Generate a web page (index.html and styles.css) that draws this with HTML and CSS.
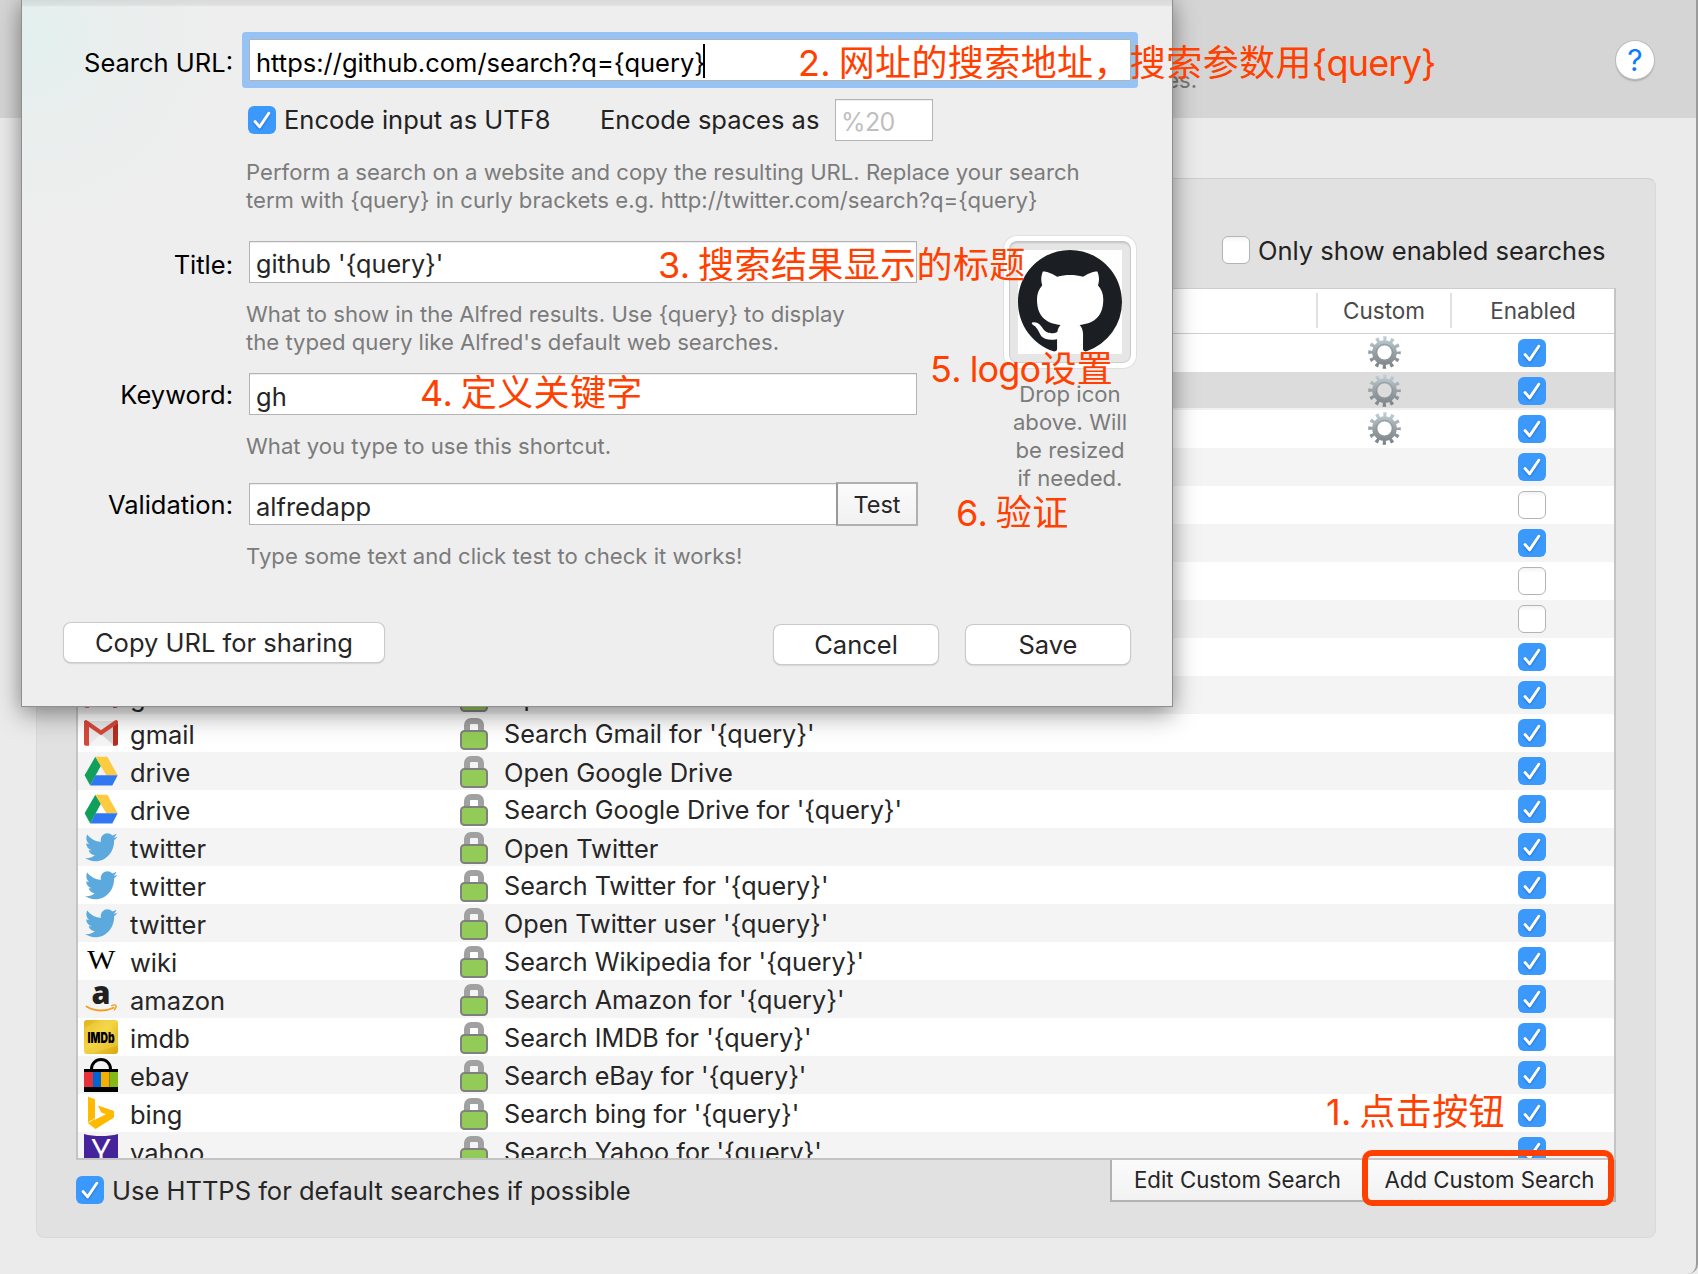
FILE: index.html
```html
<!DOCTYPE html>
<html lang="en">
<head>
<meta charset="utf-8">
<title>Web Search</title>
<link rel="stylesheet" href="styles.css">
</head>
<body>
<svg class="defs" aria-hidden="true">
  <defs>
    <linearGradient id="metal" x1="0" y1="0" x2="0" y2="33" gradientUnits="userSpaceOnUse">
      <stop offset="0" stop-color="#c3d3da"/><stop offset=".5" stop-color="#98a1a6"/><stop offset="1" stop-color="#7b8083"/>
    </linearGradient>
    <linearGradient id="gold" x1="0" y1="0" x2="1" y2="1">
      <stop offset="0" stop-color="#e0b21a"/><stop offset=".45" stop-color="#f3d544"/><stop offset="1" stop-color="#dba60c"/>
    </linearGradient>
    <symbol id="tick" viewBox="0 0 28 28"><path d="M7 15.5l4.6 5.4L20.8 7.2" fill="none" stroke="#fff" stroke-width="2.9" stroke-linecap="round" stroke-linejoin="round"/></symbol>
    <symbol id="gear" viewBox="0 0 33 33">
      <circle cx="16.5" cy="16.5" r="13.8" fill="none" stroke="url(#metal)" stroke-width="5" stroke-dasharray="3.2 4.025" stroke-dashoffset="1.6"/>
      <circle cx="16.5" cy="16.5" r="9.7" fill="none" stroke="url(#metal)" stroke-width="5.2"/>
      <circle cx="16.5" cy="16.5" r="8.2" fill="none" stroke="#8b9599" stroke-width=".8"/>
    </symbol>
    <symbol id="lock" viewBox="0 0 28 38">
      <path d="M7 18V11a4 4 0 0 1 4-4h6a4 4 0 0 1 4 4v7" fill="none" stroke="#a1a1a1" stroke-width="6"/>
      <rect x="1" y="17" width="26" height="18" rx="3.5" fill="#92cb57" stroke="#808080" stroke-width="2"/>
    </symbol>
    <symbol id="gmail" viewBox="0 0 34 38">
      <path d="M2 7h30v24.5H2z" fill="#e9e9e9"/><path d="M17 20L4 31.5h26z" fill="#f4f4f4"/><path d="M30 11v20.500L17 20z" fill="#d5d5d5"/>
      <path d="M0 9v20.500a2 2 0 0 0 2 2.200h3V12z" fill="#d6483c"/><path d="M34 9v20.500a2 2 0 0 1-2 2.200h-3V12z" fill="#b52d20"/>
      <path d="M2 8.200L17 18.800 32 8.200" fill="none" stroke="#d9463a" stroke-width="4.200" stroke-linecap="round" stroke-linejoin="miter"/>
    </symbol>
    <symbol id="drive" viewBox="0 0 34 38">
      <path d="M11.300 4.800L17 13.600 6.200 33.500.600 23.300z" fill="#11a05c"/>
      <path d="M11.300 4.800h12L33.700 23.300H22.300z" fill="#fdcb40"/>
      <path d="M11.500 23.300h22.200L28.300 33.500H6.200z" fill="#2f78f2"/>
    </symbol>
    <symbol id="twitter" viewBox="0 0 34 38">
      <path transform="translate(1 2.100) scale(1.350 1.430)" fill="#5ca9dd" d="M23.954 4.569c-.885.389-1.830.654-2.825.775 1.014-.611 1.794-1.574 2.163-2.723-.951.555-2.005.959-3.127 1.184-.896-.959-2.173-1.559-3.591-1.559-2.717 0-4.920 2.203-4.920 4.917 0 .390.045.765.127 1.124C7.691 8.094 4.066 6.130 1.640 3.161c-.427.722-.666 1.561-.666 2.475 0 1.710.870 3.213 2.188 4.096-.807-.026-1.566-.248-2.228-.616v.061c0 2.385 1.693 4.374 3.946 4.827-.413.111-.849.171-1.296.171-.314 0-.615-.030-.916-.086.631 1.953 2.445 3.377 4.604 3.417-1.680 1.319-3.809 2.105-6.102 2.105-.390 0-.779-.023-1.170-.067 2.189 1.394 4.768 2.209 7.557 2.209 9.054 0 13.999-7.496 13.999-13.986 0-.209 0-.420-.015-.630.961-.689 1.800-1.560 2.460-2.548z"/>
    </symbol>
    <symbol id="wiki" viewBox="0 0 34 38"><text x="3.200" y="27.200" font-family="Liberation Serif, serif" font-size="27" textLength="28" lengthAdjust="spacingAndGlyphs">W</text></symbol>
    <symbol id="amazon" viewBox="0 0 34 38">
      <text x="7.600" y="24" font-family="Open Sans, sans-serif" font-weight="800" font-size="32" fill="#221f1f" textLength="19" lengthAdjust="spacingAndGlyphs">a</text>
      <path d="M2.500 26.500c8.500 5.300 19.500 5 27 1.200" fill="none" stroke="#f79b1c" stroke-width="1.800" stroke-linecap="round"/>
      <path d="M27.500 25.600c2-.700 3.800-.800 4.400-.3.400.700-.1 2.900-1.500 4.400" fill="none" stroke="#f79b1c" stroke-width="1.300" stroke-linecap="round"/>
    </symbol>
    <symbol id="imdb" viewBox="0 0 34 38">
      <rect y="2" width="34" height="34" rx="3" fill="url(#gold)"/><path d="M0 10L16 2h8L34 22v6L18 32 8 36z" fill="#f6dc55" opacity=".35"/>
      <text x="3.600" y="24.700" font-family="Inter, sans-serif" font-weight="900" font-size="14.800" textLength="27" lengthAdjust="spacingAndGlyphs">IMDb</text>
    </symbol>
    <symbol id="ebay" viewBox="0 0 34 38">
      <path d="M7.500 14v-1a9.500 9.500 0 0 1 19 0v1" fill="none" stroke="#000" stroke-width="3"/>
      <path d="M0 13h34v23H0z"/><path d="M0 16h9v15H0z" fill="#e53238"/><path d="M9 16h8v15H9z" fill="#0064d2"/><path d="M17 16h8.500v15H17z" fill="#f5af02"/><path d="M25.500 16H34v15h-8.500z" fill="#86b817"/>
    </symbol>
    <symbol id="bing" viewBox="0 0 34 38">
      <path d="M4 2.700l7 2.600v20.900l-7 3z" fill="#ffb900"/><path d="M4 29.300L22 20.300l-5-2-3-6.900L30 17v6.500L11.600 35z" fill="#ffb900"/>
      <path d="M4.500 28.300l7.500-4.500" stroke="#fff" stroke-width=".8"/>
    </symbol>
    <symbol id="yahoo" viewBox="0 0 34 38">
      <path d="M0 2c10 2.700 24 2.700 34 0v34H0z" fill="#45239b"/>
      <text x="17" y="31.500" text-anchor="middle" font-family="Open Sans, sans-serif" font-size="34" fill="#fff" textLength="19" lengthAdjust="spacingAndGlyphs">Y</text>
    </symbol>
  </defs>
</svg>

<div class="window">
  <header class="header">
    <span class="header-text">es.</span>
    <button class="help-button">?</button>
  </header>

  <main class="panel">
    <div class="filter">
      <span class="check"></span><span>Only show enabled searches</span>
    </div>

    <div class="table">
      <div class="thead"><span class="th custom">Custom</span><span class="th enabled">Enabled</span></div>
      <div class="rows" id="rows"></div>
    </div>

    <footer class="footer">
      <div class="https"><span class="check on"><svg><use href="#tick"/></svg></span><span>Use HTTPS for default searches if possible</span></div>
      <div class="segments">
        <button class="segment">Edit Custom Search</button>
        <button class="segment add">Add Custom Search</button>
      </div>
    </footer>
  </main>
</div>

<section class="sheet">
  <div class="field-row">
    <label class="label">Search URL:</label>
    <div class="input focused">https://github.com/search?q={query}<i class="caret"></i></div>
  </div>
  <div class="encode-row">
    <span class="check on"><svg><use href="#tick"/></svg></span>
    <span class="encode-label">Encode input as UTF8</span>
    <span class="spaces-label">Encode spaces as</span>
    <div class="input placeholder">%20</div>
  </div>
  <p class="hint first">Perform a search on a website and copy the resulting URL. Replace your search<br>term with {query} in curly brackets e.g. http://twitter.com/search?q={query}</p>

  <div class="details">
    <div class="fields">
      <div class="field-row"><label class="label">Title:</label><div class="input quoted">github '{query}'</div></div>
      <p class="hint">What to show in the Alfred results. Use {query} to display<br>the typed query like Alfred's default web searches.</p>
      <div class="field-row keyword"><label class="label raised">Keyword:</label><div class="input">gh</div></div>
      <p class="hint">What you type to use this shortcut.</p>
      <div class="field-row validation"><label class="label raised">Validation:</label><div class="input">alfredapp</div><button class="test">Test</button></div>
      <p class="hint">Type some text and click test to check it works!</p>
    </div>
    <aside class="icon-side">
      <div class="well"><svg class="octocat" viewBox="0 0 16 16"><path fill="#1b1f23" d="M8 0C3.580 0 0 3.580 0 8c0 3.540 2.290 6.530 5.470 7.590.4.070.550-.170.550-.380 0-.190-.010-.820-.010-1.490-2.010.370-2.530-.490-2.690-.940-.090-.230-.480-.940-.820-1.130-.280-.150-.680-.520-.010-.530.630-.010 1.080.580 1.230.820.720 1.210 1.870.870 2.330.660.070-.520.280-.870.510-1.070-1.780-.2-3.640-.890-3.640-3.950 0-.870.310-1.590.820-2.150-.080-.2-.360-1.020.080-2.120 0 0 .670-.210 2.200.820.640-.180 1.320-.270 2-.270.680 0 1.360.090 2 .270 1.530-1.040 2.200-.820 2.200-.820.440 1.100.160 1.920.080 2.120.510.560.820 1.270.820 2.150 0 3.070-1.870 3.750-3.650 3.950.290.250.540.730.540 1.480 0 1.070-.010 1.930-.010 2.200 0 .210.150.460.550.380A8.013 8.013 0 0 0 16 8c0-4.420-3.580-8-8-8z"/></svg></div>
      <p class="drop-text">Drop icon<br>above. Will<br>be resized<br>if needed.</p>
    </aside>
  </div>

  <div class="actions">
    <button class="push copy">Copy URL for sharing</button>
    <button class="push cancel">Cancel</button>
    <button class="push save">Save</button>
  </div>
</section>

<span class="note note-1">1. 点击按钮</span>
<span class="note note-2">2. 网址的搜索地址，搜索参数用<span class="latin">{query}</span></span>
<span class="note note-3">3. 搜索结果显示的标题</span>
<span class="note note-4">4. 定义关键字</span>
<span class="note note-5">5. <span class="latin">logo</span>设置</span>
<span class="note note-6">6. 验证</span>
<div class="highlight"></div>

<script src="rows.js"></script>
</body>
</html>
```
FILE: styles.css
```css
* { box-sizing: border-box; }
body {
  margin: 0;
  width: 1698px;
  height: 1274px;
  overflow: hidden;
  position: relative;
  background: #ebebeb;
  color: #262626;
  font: 25.5px/38px Inter, "Noto Sans CJK SC", sans-serif;
}
p { margin: 0; }
button { margin: 0; padding: 0; font: inherit; color: inherit; border: 0; }
.defs { position: absolute; width: 0; height: 0; }

.window {
  width: 1698px;
  height: 1274px;
  border-right: 2px solid #9b9b9b;
  border-radius: 0 0 10px 0;
}
.header {
  height: 118px;
  background: #d5d5d5;
  display: flex;
  justify-content: flex-end;
}
.header-text { font-size: 22px; line-height: 28px; margin: 66px 419px 0 0; color: #777; }
.help-button {
  width: 38px; height: 38px;
  margin: 41px 42px 0 0;
  border-radius: 50%;
  background: #fff;
  color: #0a7bff;
  font-size: 30px; line-height: 38px;
  box-shadow: 0 0 0 1px #bcbcbc, 0 2px 2px rgba(0,0,0,.25);
}

.panel {
  width: 1620px;
  height: 1060px;
  margin: 60px 0 0 36px;
  padding: 57px 39px 0 39px;
  background: #e1e1e1;
  border: 1px solid #d9d9d9;
  border-top-color: #cecece;
  border-radius: 8px;
}
.filter { display: flex; gap: 8px; height: 29px; line-height: 30px; padding-left: 1146px; color: #222; }
.check {
  flex: none;
  width: 28px; height: 28px;
  border: 1.5px solid #b4b4b4;
  border-radius: 6px;
  background: linear-gradient(#f3f3f3, #fff 5px);
}
.check.on { border: 0; background: #3b99fc; }
.check svg { display: block; width: 28px; height: 28px; filter: drop-shadow(0 1px 1px rgba(0,40,110,.4)); }

.table {
  width: 1540px;
  height: 872px;
  margin-top: 23px;
  border: 2px solid #c4c4c4;
  border-top: 1px solid #cecece;
  background: #fff;
  overflow: hidden;
}
.thead {
  height: 45px;
  padding: 4px 0;
  border-bottom: 1px solid #d0d0d0;
  display: flex;
  justify-content: flex-end;
  font-size: 22.500px;
  line-height: 35px;
  color: #4a4a4a;
  text-align: center;
}
.th { height: 35px; border-left: 2px solid #e0e0e0; }
.th.custom { width: 134px; }
.th.enabled { width: 164px; }
.row {
  height: 38px;
  display: grid;
  grid-template-columns: 34px 342px 28px 828px 134px 164px;
  padding-left: 6px;
  line-height: 41px;
  overflow: hidden;
}
.row:nth-child(even) { background: #f4f4f4; }
.row.selected { background: linear-gradient(#dcdcdc 36px, #f1f1f1 36px); }
.row .icon { width: 34px; height: 38px; }
.row .keyword-cell { padding-left: 12px; }
.row .lock { width: 28px; height: 38px; }
.row .title-cell { padding-left: 16px; }
.row .title-cell.quoted { font-size: 25.200px; }
.row .gear { width: 33px; height: 33px; margin: 2px auto 0 51.500px; display: block; }
.row .check { margin: 5px 0 0 68px; }

.footer { display: flex; justify-content: space-between; }
.https { display: flex; gap: 8px; padding-top: 16px; line-height: 30px; }
.segments {
  display: flex;
  height: 42px;
  border: 2px solid #b2b2b2;
  border-top: 0;
  background: linear-gradient(#fbfbfb, #f2f2f2);
  font-size: 22.250px;
  line-height: 40px;
}
.segment { width: 251px; background: none; }
.segment.add { border-left: 2px solid #b2b2b2; }

.sheet {
  position: absolute;
  left: 21px; top: -2px;
  width: 1152px; height: 709px;
  padding: 40px 36px 0 0;
  border: 1px solid #8f8f8f;
  background:
    linear-gradient(rgba(0,0,0,.09), rgba(0,0,0,.06) 6px, rgba(0,0,0,0) 8px),
    radial-gradient(circle at 10px 40px, #e2f0ee, rgba(232,239,238,.7) 80px, rgba(238,238,238,0) 190px),
    #eeeeee;
  box-shadow: 0 8px 24px rgba(0,0,0,.36), 0 0 16px rgba(0,0,0,.12);
}
.field-row { display: flex; align-items: flex-start; height: 42px; }
.label { flex: none; width: 211px; margin-right: 16px; text-align: right; line-height: 47px; color: #000; }
.label.raised { line-height: 43px; }
.input {
  flex: 1;
  height: 42px;
  padding: 0 6px;
  border: 1px solid #b3b3b3;
  background: #fff;
  box-shadow: inset 0 1px 0 #ededed;
  line-height: 45px;
  white-space: nowrap;
}
.input.focused { flex: 0 0 882px; color: #000; box-shadow: 0 0 0 7px #97c3f4; border-radius: 1px; display: flex; }
.input.quoted { font-size: 25.200px; }
.caret { width: 2px; height: 34px; margin-top: 4px; margin-left: -2px; background: #000; }
.encode-row { display: flex; margin-top: 18px; padding-left: 226px; line-height: 42px; height: 42px; }
.encode-row .check { margin-top: 7px; }
.encode-label { width: 316px; padding-left: 8px; color: #222; }
.spaces-label { width: 243px; padding-left: 8px; color: #222; }
.input.placeholder { flex: 0 0 98px; color: #bfbfbf; font-size: 25px; letter-spacing: -.6px; line-height: 45px; padding-left: 5px; }
.hint { margin: 17px 0 0 224px; font-size: 22.130px; line-height: 28px; color: #7b7b7b; white-space: nowrap; }
.details { display: flex; margin-top: 27px; height: 329px; }
.fields { flex: none; width: 895px; }
.field-row.keyword { margin-top: 17px; }
.field-row.validation { margin-top: 23px; }
.validation .input { border-right: 0; }
.test {
  width: 82px; height: 44px;
  margin: -1px -1px 0 0;
  border: 2px solid #b0b0b0;
  border-left-color: #999;
  background: linear-gradient(#fbfbfb, #f1f1f1);
  font-size: 23.500px;
  line-height: 42px;
}
.icon-side { flex: none; width: 132px; margin: -5px 0 0 87px; }
.well {
  width: 132px; height: 132px;
  padding: 9px;
  border: 5px solid #fff;
  border-radius: 13px;
  background: #e6e6e6;
  box-shadow: 0 0 0 1px #e0e0e0, inset 0 2px 2px #c2c2c2, inset 0 0 0 1px #cfcfcf;
}
.octocat { display: block; width: 104px; height: 104px; background: #fff; }
.drop-text { margin-top: 12px; text-align: center; font-size: 22.130px; line-height: 28px; color: #7b7b7b; }
.actions { display: flex; margin-top: 53px; padding-left: 42px; }
.push {
  height: 39px;
  border-radius: 7px;
  background: #fff;
  line-height: 40px;
  box-shadow: 0 0 0 1px #cacaca, 0 1px 2px rgba(0,0,0,.35);
}
.copy { width: 320px; }
.cancel { width: 164px; margin: 2px 0 0 390px; }
.save { width: 164px; margin: 2px 0 0 28px; }

.note { position: absolute; font-size: 36px; line-height: 40px; letter-spacing: .4px; word-spacing: -3px; color: #ff4000; white-space: nowrap; }
.note .latin { letter-spacing: -.8px; }
.note-1 { left: 1326px; top: 1092px; }
.note-2 { left: 798px; top: 43px; }
.note-3 { left: 658px; top: 245px; }
.note-4 { left: 420px; top: 373px; }
.note-5 { left: 930px; top: 349px; }
.note-6 { left: 956px; top: 493px; }
.highlight { position: absolute; left: 1362px; top: 1150px; width: 252px; height: 56px; border: 6px solid #ff4000; border-radius: 10px; }
```
FILE: rows.js
```js
// Each entry: icon, keyword, title, enabled, plus an optional flag for custom searches.
const searches = [
  { on: 1, custom: 1 }, { on: 1, custom: 1, selected: 1 }, { on: 1, custom: 1 },
  { on: 1 }, { on: 0 }, { on: 1 }, { on: 0 }, { on: 0 }, { on: 1 },
  { icon: 'gmail', key: 'gmail', title: 'Open Gmail', on: 1 },
  { icon: 'gmail', key: 'gmail', title: "Search Gmail for '{query}'", on: 1 },
  { icon: 'drive', key: 'drive', title: 'Open Google Drive', on: 1 },
  { icon: 'drive', key: 'drive', title: "Search Google Drive for '{query}'", on: 1 },
  { icon: 'twitter', key: 'twitter', title: 'Open Twitter', on: 1 },
  { icon: 'twitter', key: 'twitter', title: "Search Twitter for '{query}'", on: 1 },
  { icon: 'twitter', key: 'twitter', title: "Open Twitter user '{query}'", on: 1 },
  { icon: 'wiki', key: 'wiki', title: "Search Wikipedia for '{query}'", on: 1 },
  { icon: 'amazon', key: 'amazon', title: "Search Amazon for '{query}'", on: 1 },
  { icon: 'imdb', key: 'imdb', title: "Search IMDB for '{query}'", on: 1 },
  { icon: 'ebay', key: 'ebay', title: "Search eBay for '{query}'", on: 1 },
  { icon: 'bing', key: 'bing', title: "Search bing for '{query}'", on: 1 },
  { icon: 'yahoo', key: 'yahoo', title: "Search Yahoo for '{query}'", on: 1 }
];
const use = (id, cls) => `<svg class="${cls}"><use href="#${id}"/></svg>`;
document.getElementById('rows').innerHTML = searches.map(s => `
  <div class="row${s.selected ? ' selected' : ''}">
    ${s.icon ? use(s.icon, 'icon') : '<span></span>'}
    <span class="keyword-cell">${s.key || ''}</span>
    ${s.icon ? use('lock', 'lock') : '<span></span>'}
    <span class="title-cell${s.title && s.title.includes("'") ? ' quoted' : ''}">${s.title || ''}</span>
    <span>${s.custom ? use('gear', 'gear') : ''}</span>
    <span class="check${s.on ? ' on' : ''}">${s.on ? '<svg><use href="#tick"/></svg>' : ''}</span>
  </div>`).join('');
```
